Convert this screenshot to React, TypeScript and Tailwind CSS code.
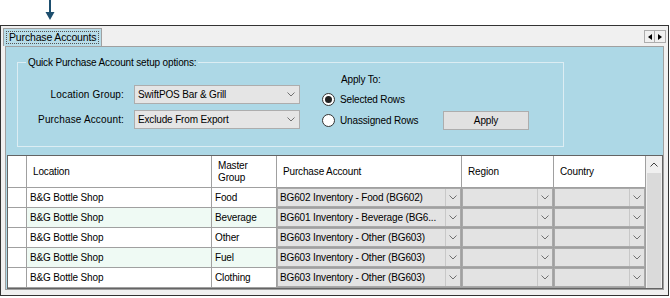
import React from "react";

const font = { fontFamily: '"Liberation Sans", Arial, sans-serif' };

const Chevron = ({ up = false }: { up?: boolean }) => (
  <svg width="8" height="5" viewBox="0 0 8 5">
    <path d={up ? "M0.5 4.5 L4 1 L7.5 4.5" : "M0.5 0.5 L4 4 L7.5 0.5"} fill="none" stroke={up ? "#404040" : "#707070"} strokeWidth="1" />
  </svg>
);

const rows = [
  { group: "Food", account: "BG602 Inventory - Food (BG602)" },
  { group: "Beverage", account: "BG601 Inventory - Beverage (BG6..." },
  { group: "Other", account: "BG603 Inventory - Other (BG603)" },
  { group: "Fuel", account: "BG603 Inventory - Other (BG603)" },
  { group: "Clothing", account: "BG603 Inventory - Other (BG603)" },
];

const CellCombo = ({ text, w }: { text?: string; w: string }) => (
  <div className={`${w} h-[20px] border-r border-b border-[#a0a0a0] flex`}>
    <div className="flex-1 flex border border-[#a9a9a9] bg-[#e3e3e3]">
      <div className="flex-1 pl-[2px] leading-[17px] whitespace-nowrap overflow-hidden">{text}</div>
      <div className="w-[15px] border-l border-[#c8c8c8] flex items-center justify-center">
        <Chevron />
      </div>
    </div>
  </div>
);

const FormCombo = ({ text }: { text: string }) => (
  <div className="w-[166px] h-[19px] flex items-center border border-[#adadad] bg-[#e5e5e5]">
    <span className="flex-1 pl-[3px]">{text}</span>
    <span className="w-[16px] flex justify-center">
      <Chevron />
    </span>
  </div>
);

const Radio = ({ checked }: { checked?: boolean }) => (
  <span className="w-[13px] h-[13px] rounded-full border border-[#333] bg-white flex items-center justify-center">
    {checked && <span className="w-[7px] h-[7px] rounded-full bg-[#222]" />}
  </span>
);

export default function App() {
  return (
    <div className="w-[670px] h-[298px] bg-white text-[10px] tracking-[-0.15px] text-black" style={font}>
      {/* pointer arrow */}
      <div className="h-[25px] pl-[44px]">
        <svg width="12" height="22" viewBox="0 0 12 22">
          <line x1="6" y1="0" x2="6" y2="14" stroke="#1d4e6e" strokeWidth="2" />
          <path d="M1.5 12 L10.5 12 L6 20 Z" fill="#1d4e6e" />
        </svg>
      </div>

      <div className="w-[669px] h-[271px] border border-[#333] bg-[#f0f0f0] flex flex-col">
        {/* tab strip */}
        <div className="h-[20px] flex items-end">
          <div className="ml-[2px] w-[99px] h-[18px] border border-b-0 border-[#a0a0a0] bg-[#b8dde9] p-[2px]">
            <div className="h-full border border-dotted border-[#555] flex items-center pl-[2px] text-[10.5px]">
              Purchase Accounts
            </div>
          </div>
          <div className="flex-1" />
          <div className="flex mb-[3px] mr-[2px]">
            <div className="w-[11px] h-[13px] border border-[#adadad] flex items-center justify-center">
              <svg width="4" height="6" viewBox="0 0 4 6"><path d="M4 0 L0 3 L4 6 Z" fill="#000" /></svg>
            </div>
            <div className="w-[11px] h-[13px] border border-l-0 border-[#adadad] flex items-center justify-center">
              <svg width="4" height="6" viewBox="0 0 4 6"><path d="M0 0 L4 3 L0 6 Z" fill="#000" /></svg>
            </div>
          </div>
        </div>

        {/* tab page */}
        <div className="ml-[4px] w-[659px] border border-[#a0a0a0] bg-[#add8e6] flex flex-col">
          <div className="h-[108px] pl-[11px] pt-[9px]">
            <fieldset className="w-[547px] border border-[#dcedf3] px-[8px] pb-[16px]">
              <legend className="px-[2px] h-[13px] leading-[13px]">Quick Purchase Account setup options:</legend>
              <div className="flex pt-[4px] -ml-[8px]">
                <div className="flex flex-col gap-[6px] mt-[12px]">
                  <div className="flex items-center">
                    <span className="w-[108px] text-right pr-[2px] tracking-[0.15px]">Location Group:</span>
                    <span className="w-[8px]" />
                    <FormCombo text="SwiftPOS Bar & Grill" />
                  </div>
                  <div className="flex items-center">
                    <span className="w-[108px] text-right pr-[2px] tracking-[0.15px]">Purchase Account:</span>
                    <span className="w-[8px]" />
                    <FormCombo text="Exclude From Export" />
                  </div>
                </div>
                <div className="flex flex-col ml-[22px]">
                  <div className="h-[14px] leading-[14px] pl-[19px]">Apply To:</div>
                  <div className="h-[16px] mt-[4px] flex items-center gap-[5px]">
                    <Radio checked />
                    <span>Selected Rows</span>
                  </div>
                  <div className="h-[19px] mt-[4px] flex items-center">
                    <Radio />
                    <span className="ml-[5px] w-[103px]">Unassigned Rows</span>
                    <div className="w-[86px] h-[19px] border border-[#adadad] bg-[#e1e1e1] flex items-center justify-center">
                      Apply
                    </div>
                  </div>
                </div>
              </div>
            </fieldset>
          </div>

          {/* data grid */}
          <div className="ml-[1px] w-[656px] h-[134px] border border-[#646464] bg-white flex">
            <div className="flex flex-col">
              <div className="flex h-[32px]">
                <div className="w-[19px] border-r border-b border-[#a0a0a0]" />
                <div className="w-[185px] border-r border-b border-[#a0a0a0] flex items-center pl-[6px]">Location</div>
                <div className="w-[65px] border-r border-b border-[#a0a0a0] flex items-center pl-[6px] leading-[12px]">
                  Master<br />Group
                </div>
                <div className="w-[185px] border-r border-b border-[#a0a0a0] flex items-center pl-[6px]">Purchase Account</div>
                <div className="w-[92px] border-r border-b border-[#a0a0a0] flex items-center pl-[6px]">Region</div>
                <div className="w-[92px] border-r border-b border-[#a0a0a0] flex items-center pl-[6px]">Country</div>
              </div>
              {rows.map((r, i) => (
                <div key={i} className={`flex h-[20px] ${i % 2 === 1 ? "bg-[#effaf4]" : "bg-white"}`}>
                  <div className="w-[19px] border-r border-b border-[#a0a0a0] bg-white" />
                  <div className="w-[185px] border-r border-b border-[#a0a0a0] flex items-center pl-[3px]">B&amp;G Bottle Shop</div>
                  <div className="w-[65px] border-r border-b border-[#a0a0a0] flex items-center pl-[3px]">{r.group}</div>
                  <CellCombo w="w-[185px]" text={r.account} />
                  <CellCombo w="w-[92px]" />
                  <CellCombo w="w-[92px]" />
                </div>
              ))}
            </div>
            {/* vertical scrollbar */}
            <div className="flex-1 bg-[#f0f0f0] flex flex-col">
              <div className="h-[17px] flex items-center justify-center">
                <Chevron up />
              </div>
              <div className="flex-1 mx-[1px] bg-[#dadada]" />
            </div>
          </div>
        </div>
      </div>
    </div>
  );
}
